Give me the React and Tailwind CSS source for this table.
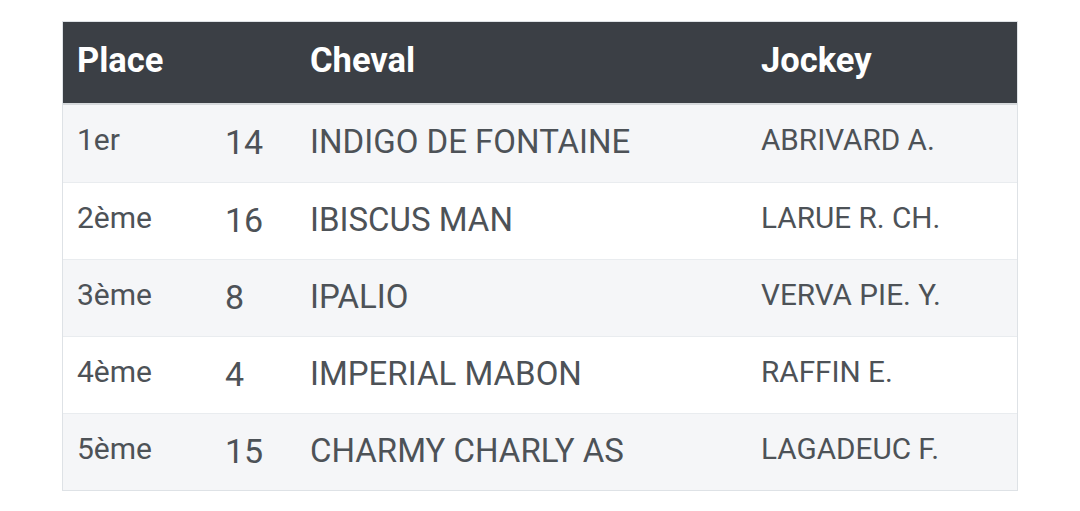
import React from 'react'

const rows = [
  { place: '1er', num: '14', horse: 'INDIGO DE FONTAINE', jockey: 'ABRIVARD A.' },
  { place: '2ème', num: '16', horse: 'IBISCUS MAN', jockey: 'LARUE R. CH.' },
  { place: '3ème', num: '8', horse: 'IPALIO', jockey: 'VERVA PIE. Y.' },
  { place: '4ème', num: '4', horse: 'IMPERIAL MABON', jockey: 'RAFFIN E.' },
  { place: '5ème', num: '15', horse: 'CHARMY CHARLY AS', jockey: 'LAGADEUC F.' },
]

export default function App() {
  return (
    <div className="min-h-screen bg-white pt-[21px]" style={{ fontFamily: 'Roboto, "Noto Sans", sans-serif' }}>
      <div className="mx-auto w-[956px] border border-[#dee2e6]">
        {/* Header */}
        <div className="grid grid-cols-[149px_84px_453px_1fr] h-[83px] bg-[#3b3f45] border-b-2 border-[#d6d9dc] text-white font-bold text-[34.5px] leading-none">
          <div className="col-span-2 pl-[14px] pt-[21px]">Place</div>
          <div className="pl-[14px] pt-[21px]">Cheval</div>
          <div className="pl-[12px] pt-[21px]">Jockey</div>
        </div>

        {/* Rows */}
        {rows.map((r, i) => (
          <div
            key={i}
            className={`grid grid-cols-[149px_84px_453px_1fr] h-[77px] text-[#4d5257] leading-none ${i > 0 ? 'border-t border-[#e9ecef]' : ''} ${i % 2 === 0 ? 'bg-[#f5f6f8]' : 'bg-white'}`}
          >
            <div className="pl-[14px] pt-[20px] text-[30px]">{r.place}</div>
            <div className="pl-[13px] pt-[20px] text-[34px]">{r.num}</div>
            <div className="pl-[14px] pt-[20px] text-[33px]">{r.horse}</div>
            <div className="pl-[12px] pt-[20px] text-[29.7px]">{r.jockey}</div>
          </div>
        ))}
      </div>
    </div>
  )
}
